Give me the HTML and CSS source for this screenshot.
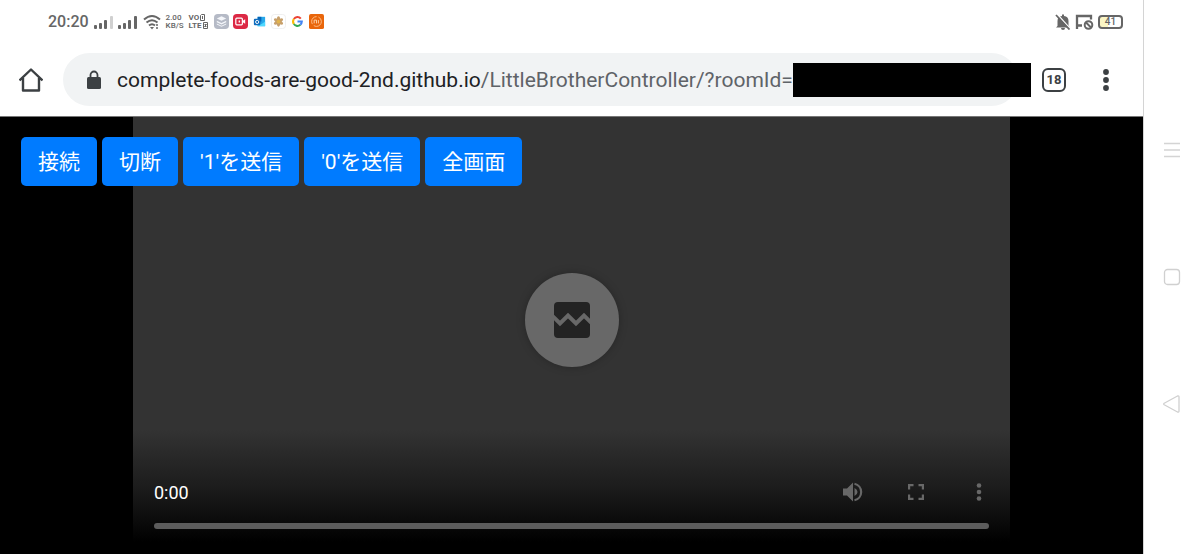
FILE: index.html
```html
<!DOCTYPE html>
<html lang="ja">
<head>
<meta charset="utf-8">
<meta name="viewport" content="width=device-width, initial-scale=1">
<title>LittleBrotherController</title>
<link rel="stylesheet" href="styles.css">
</head>
<body>
<div class="device">
  <div class="screen">
    <header class="status">
      <div class="status-group">
        <span class="clock">20:20</span>
        <svg width="20" height="14" viewBox="0 0 20 14"><g fill="#666"><rect x="0" y="10" width="3" height="4" rx="1"/><rect x="5" y="8" width="3" height="6" rx="1"/><rect x="10" y="5" width="3" height="9" rx="1"/></g><rect x="16" y="1" width="3" height="13" rx="1" fill="#d0d0d0"/></svg>
        <svg width="20" height="14" viewBox="0 0 20 14"><g fill="#666"><rect x="0" y="10" width="3" height="4" rx="1"/><rect x="5" y="8" width="3" height="6" rx="1"/><rect x="10" y="5" width="3" height="9" rx="1"/><rect x="16" y="1" width="3" height="13" rx="1"/></g></svg>
        <svg width="20" height="16" viewBox="0 0 18 16" fill="none" stroke="#666" stroke-width="2"><path d="M1 5.500Q9-1.500 17 5.500M3.500 8.500Q9 4 14.500 8.500M6 11.500Q9 9 12 11.500"/><path d="M7 13h4l-2 2.500z" fill="#666" stroke="none"/><path d="M14 10v2M14 13v2" stroke-width="1.500"/></svg>
        <span class="tiny"><span>2.00</span><span>KB/S</span></span>
        <span class="tiny bold"><span>VO<svg class="sim" viewBox="0 0 5 7"><path d="M1.500.5h3v6h-4v-5zM2.500 2v3" fill="none" stroke="#666"/></svg></span><span>LTE<svg class="sim" viewBox="0 0 5 7"><path d="M.5.5h4v6h-4zM1.500 2.500h2l-2 2h2" fill="none" stroke="#666"/></svg></span></span>
        <span class="apps">
          <svg viewBox="0 0 16 16"><rect width="16" height="16" rx="4" fill="#b5bac6"/><path d="M8 2.500l5 2.300-5 2.400-5-2.400zM3 7.300l5 2.400 5-2.400v1.400l-5 2.400-5-2.400zM3 10.200l5 2.400 5-2.400v1l-5 2.400-5-2.400z" fill="#f4f6fa"/></svg>
          <svg viewBox="0 0 16 16"><rect width="16" height="16" rx="4" fill="#dc2945"/><rect x="3" y="4.500" width="7" height="7" rx="1" fill="none" stroke="#fff" stroke-width="1.300"/><path d="M10 7.500l3-2v5l-3-2zM6 7h1.500v2H6z" fill="#fff"/></svg>
          <svg viewBox="0 0 16 16"><path d="M6 3h8v10H6z" fill="#28a8ea"/><path d="M6 3h4v5H6z" fill="#0364b8"/><path d="M14 8l-4 3-4-3v5h8z" fill="#50d9ff"/><rect x="2" y="5" width="7" height="7" rx="1" fill="#0f6cbd"/><circle cx="5.500" cy="8.500" r="1.700" fill="none" stroke="#fff"/></svg>
          <svg viewBox="0 0 16 16"><rect x=".5" y=".5" width="15" height="15" rx="3" fill="#fff" stroke="#eee"/><g fill="#c7a06c"><ellipse cx="8" cy="8" rx="2" ry="5.500"/><ellipse cx="8" cy="8" rx="2" ry="5.500" transform="rotate(60 8 8)"/><ellipse cx="8" cy="8" rx="2" ry="5.500" transform="rotate(120 8 8)"/></g><circle cx="8" cy="8" r="2" fill="#e2b34c"/></svg>
          <svg viewBox="0 0 16 16"><g fill="none" stroke-width="2.200"><path d="M4.100 5.300A4.600 4.600 0 0 1 11.500 5" stroke="#ea4335"/><path d="M4.100 5.300A5 5 0 0 0 4.100 10.700" stroke="#fbbc05"/><path d="M4.100 10.700A4.600 4.600 0 0 0 11 11.500" stroke="#34a853"/><path d="M11 11.500A5 5 0 0 0 12.600 8H8" stroke="#4285f4"/></g></svg>
          <svg viewBox="0 0 16 16"><rect width="16" height="16" rx="2" fill="#e9660b"/><circle cx="8" cy="8" r="5.200" fill="none" stroke="#ffc28d" stroke-dasharray="11 2"/><path d="M5.500 10V6.500h2.500V10M10 6.500V10" fill="none" stroke="#ffd5af"/></svg>
        </span>
      </div>
      <div class="status-group">
        <svg width="16" height="16" viewBox="0 0 16 16"><path d="M2.500 12V7q0-4.500 4.500-5V.5h2V2q4.500.5 4.500 5v5l1.500 1.500H1zM6 14h4q0 2-2 2t-2-2z" fill="#666"/><path d="M2 0l13.500 15" stroke="#fff" stroke-width="1.500"/><path d="M1 1l13.500 14.500" stroke="#666" stroke-width="1.800"/></svg>
        <svg width="19" height="16" viewBox="0 0 19 16" fill="none" stroke="#666" stroke-width="2.300"><path d="M2 15V2h14v3.500M2 11.500h5"/><circle cx="13.500" cy="11" r="3.800" stroke-width="2"/><path d="M11 8.500l5 5" stroke-width="2"/></svg>
        <span class="battery">41</span>
      </div>
    </header>

    <nav class="toolbar">
      <button class="icon-button home" aria-label="Home"><svg width="24" height="24" viewBox="0 0 24 24" fill="none" stroke="#3c4043" stroke-width="2.400" stroke-linejoin="round"><path d="M.500 12.500L12 1.500l11.500 11M4 10v12.500h16V10"/></svg></button>
      <div class="address">
        <svg class="lock" width="16" height="20" viewBox="0 0 16 20"><rect x="1" y="7" width="14" height="12" rx="1.500" fill="#3c4043"/><path d="M4.500 8V5a3.500 3.500 0 0 1 7 0v3" fill="none" stroke="#3c4043" stroke-width="1.800"/></svg>
        <span class="url"><span class="host">complete-foods-are-good-2nd.github.io</span>/LittleBrotherController/?roomId=</span>
        <span class="redacted"></span>
      </div>
      <button class="tabs" aria-label="Tabs">18</button>
      <button class="icon-button" aria-label="Menu"><svg width="8" height="24" viewBox="0 0 8 24" fill="#3c4043"><circle cx="4" cy="4" r="2.900"/><circle cx="4" cy="12" r="2.900"/><circle cx="4" cy="20" r="2.900"/></svg></button>
    </nav>

    <main class="stage">
      <div class="actions">
        <button class="action">接続</button>
        <button class="action">切断</button>
        <button class="action">'1'を送信</button>
        <button class="action">'0'を送信</button>
        <button class="action">全画面</button>
      </div>
      <section class="player">
        <div class="poster">
          <div class="badge"><svg width="36" height="36" viewBox="0 0 36 36"><rect width="36" height="36" rx="4" fill="#232323"/><path d="M-2 13.500l8 8 8-8 8 8 8-8 8 8" fill="none" stroke="#686868" stroke-width="4"/></svg></div>
        </div>
        <div class="controls">
          <span class="time">0:00</span>
          <button class="control" aria-label="Mute"><svg width="20" height="20" viewBox="0 0 20 20"><path d="M0 6.500h4l6-6v19l-6-6H0z" fill="#686868"/><path d="M11.500 6v8q3-1.300 3-4t-3-4z" fill="#686868"/><path d="M11.500 1.700a8.500 8.500 0 0 1 0 16.600" fill="none" stroke="#686868" stroke-width="2.200"/></svg></button>
          <button class="control" aria-label="Fullscreen"><svg width="16" height="16" viewBox="0 0 16 16" fill="none" stroke="#686868" stroke-width="2.200"><path d="M1.100 5.500V1.100h4.400M10.500 1.100h4.400v4.400M14.900 10.500v4.400h-4.400M5.500 14.900H1.100v-4.400"/></svg></button>
          <button class="control" aria-label="More"><svg width="6" height="18" viewBox="0 0 6 18" fill="#686868"><circle cx="3" cy="2.500" r="2.300"/><circle cx="3" cy="9" r="2.300"/><circle cx="3" cy="15.500" r="2.300"/></svg></button>
        </div>
        <input class="seek" type="range" min="0" max="100" value="0" aria-label="Seek" disabled>
      </section>
    </main>
  </div>

  <aside class="navbar">
    <button class="icon-button" aria-label="Recents"><svg width="18" height="18" viewBox="0 0 18 18" stroke="#d4d4d4" stroke-width="1.500"><path d="M1 2.500h16M1 9h16M1 15.500h16"/></svg></button>
    <button class="icon-button" aria-label="Home screen"><svg width="18" height="18" viewBox="0 0 18 18" fill="none" stroke="#d0d0d0" stroke-width="1.300"><rect x="1.500" y="1.500" width="15" height="15" rx="3"/></svg></button>
    <button class="icon-button" aria-label="Back"><svg width="18" height="18" viewBox="0 0 18 18" fill="none" stroke="#d0d0d0" stroke-width="1.300" stroke-linejoin="round"><path d="M1.200 8.200L14.500 1Q16 .6 16 2v14q0 1.400-1.500 1L1.200 9.800q-1-.8 0-1.600z"/></svg></button>
  </aside>
</div>
</body>
</html>
```
FILE: styles.css
```css
* { box-sizing: border-box; }

body {
  margin: 0;
  font-family: Roboto, "Noto Sans CJK JP", sans-serif;
  background: #fff;
}

button {
  margin: 0;
  padding: 0;
  border: 0;
  background: none;
  font: inherit;
  color: inherit;
}

svg { display: block; flex: none; }

.device { display: flex; min-height: 100vh; }

.screen {
  flex: 1;
  min-width: 0;
  display: flex;
  flex-direction: column;
}

/* Status bar */
.status {
  display: flex;
  justify-content: space-between;
  height: 43px;
  padding: 0 20px 0 48px;
  color: #666;
}

.status-group { display: flex; align-items: center; gap: 4px; }
.clock { font-size: 16px; font-weight: 500; margin-right: 1px; }

.tiny {
  display: flex;
  flex-direction: column;
  width: 19px;
  font-size: 8px;
  font-weight: 500;
  line-height: 8px;
  white-space: nowrap;
}

.bold { font-weight: 700; }
.tiny > span { display: flex; align-items: center; gap: 1px; }
.sim { width: 5px; height: 7px; }

.apps { display: flex; gap: 4px; margin-left: 2px; }
.apps svg { width: 15px; height: 15px; }

.battery {
  width: 25px;
  height: 14px;
  border: 2px solid #666;
  border-radius: 4px;
  background: linear-gradient(90deg, #fbf6c5 40%, #fff 40%);
  font-size: 10px;
  font-weight: 500;
  line-height: 10px;
  text-align: center;
}

/* Browser toolbar */
.toolbar {
  display: flex;
  align-items: center;
  height: 74px;
  padding: 0 33px 0 19px;
  border-bottom: 1px solid #777;
}

.icon-button { display: grid; place-items: center; }
.home { margin-right: 20px; }

.address {
  flex: 1;
  min-width: 0;
  display: flex;
  align-items: center;
  height: 53px;
  margin-right: 24px;
  padding-left: 23px;
  border-radius: 27px;
  background: #f1f3f4;
}

.lock { margin-right: 15px; }

.url {
  font-size: 21px;
  line-height: 28px;
  white-space: nowrap;
  color: #5f6368;
}

.host { color: #202124; }

.redacted {
  flex: 1;
  height: 34px;
  margin-right: -13px;
  background: #000;
}

.tabs {
  width: 24px;
  height: 24px;
  margin-right: 36px;
  border: 2px solid #3c4043;
  border-radius: 6px;
  font-size: 13px;
  font-weight: 700;
  line-height: 20px;
  text-align: center;
  color: #3c4043;
}

/* Page */
.stage {
  position: relative;
  flex: 1;
  display: flex;
  padding: 0 133px;
  background: #000;
}

.actions {
  position: absolute;
  top: 20px;
  left: 21px;
  display: flex;
  gap: 5px;
}

.action {
  height: 49px;
  padding: 0 17px 3px;
  border-radius: 5px;
  background: #007bff;
  color: #fff;
  font-size: 21px;
  white-space: nowrap;
}

.player {
  flex: 1;
  display: flex;
  flex-direction: column;
  padding: 0 21px 23px;
  background: linear-gradient(to top, #000 12px, #1b1b1b 64px, #333 124px);
}

.poster {
  flex: 1;
  display: grid;
  place-items: center;
  padding-top: 54px;
}

.badge {
  display: grid;
  place-items: center;
  width: 94px;
  height: 94px;
  border-radius: 50%;
  background: #686868;
  box-shadow: 0 0 8px rgba(0, 0, 0, 0.25);
}

.controls {
  display: flex;
  align-items: center;
  height: 48px;
  color: #fff;
}

.time { flex: 1; font-size: 18px; }

.control {
  display: grid;
  place-items: center;
  width: 63px;
  height: 48px;
}

.control:last-child { margin-right: -21px; }

.seek {
  appearance: none;
  width: 100%;
  height: 6px;
  margin: 7px 0 2px;
  border-radius: 3px;
  background: #5c5c5c;
}

.seek::-webkit-slider-thumb { appearance: none; width: 0; height: 0; }

/* System navigation */
.navbar {
  display: flex;
  flex-direction: column;
  align-items: center;
  justify-content: center;
  gap: 109px;
  width: 57px;
  border-left: 1px solid #d4d4d4;
}
```
